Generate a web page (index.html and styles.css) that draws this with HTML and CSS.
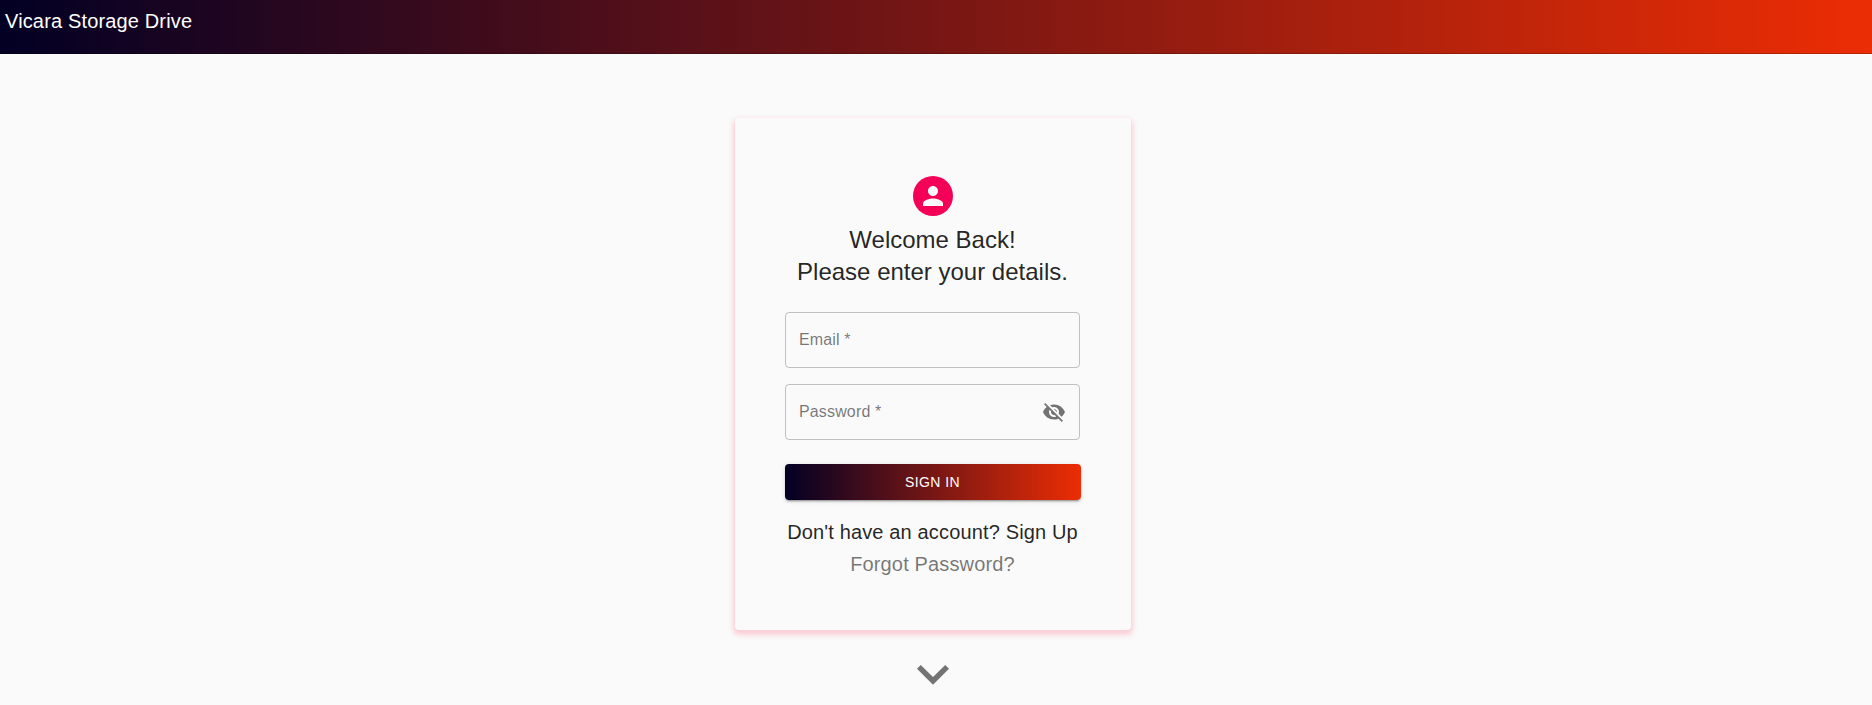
FILE: index.html
```html
<!DOCTYPE html>
<html lang="en">
<head>
<meta charset="utf-8">
<title>Vicara Storage Drive</title>
<link rel="stylesheet" href="styles.css">
</head>
<body>
<header class="topbar"><span class="brand">Vicara Storage Drive</span></header>
<main class="page">
  <section class="card">
    <div class="avatar">
      <svg class="person" viewBox="0 0 24 24"><path d="M12 12c2.210 0 4-1.790 4-4s-1.790-4-4-4-4 1.790-4 4 1.790 4 4 4zm0 2c-2.670 0-8 1.340-8 4v2h16v-2c0-2.660-5.330-4-8-4z"/></svg>
    </div>
    <h1 class="title">Welcome Back!<br>Please enter your details.</h1>
    <form class="form">
      <div class="field"><label class="label">Email *</label></div>
      <div class="field">
        <label class="label">Password *</label>
        <svg class="eye" viewBox="0 0 24 24"><path d="M12 7c2.760 0 5 2.240 5 5 0 .650-.130 1.260-.360 1.830l2.920 2.920c1.510-1.260 2.700-2.890 3.430-4.750-1.730-4.390-6-7.500-11-7.500-1.400 0-2.740.250-3.980.700l2.160 2.160C10.740 7.130 11.350 7 12 7zM2 4.270l2.280 2.280.460.460C3.080 8.300 1.780 10.020 1 12c1.730 4.390 6 7.500 11 7.500 1.550 0 3.030-.300 4.380-.840l.420.420L19.730 22 21 20.730 3.270 3 2 4.270zM7.530 9.800l1.550 1.550c-.050.210-.080.430-.080.650 0 1.660 1.340 3 3 3 .220 0 .440-.030.650-.080l1.550 1.550c-.670.330-1.410.530-2.200.530-2.760 0-5-2.240-5-5 0-.790.200-1.530.530-2.200zm4.310-.780l3.150 3.150.020-.160c0-1.660-1.340-3-3-3l-.170.010z"/></svg>
      </div>
      <button class="submit" type="button">SIGN IN</button>
    </form>
    <a class="link">Don't have an account? Sign Up</a>
    <a class="link muted">Forgot Password?</a>
  </section>
  <svg class="chevron" viewBox="0 0 24 24"><path d="M16.590 8.590L12 13.170 7.410 8.590 6 10l6 6 6-6z"/></svg>
</main>
</body>
</html>
```
FILE: styles.css
```css
* { box-sizing: border-box; }
html, body { height: 100%; }
body {
  margin: 0;
  overflow: hidden;
  background: #fafafa;
  color: rgba(0, 0, 0, .87);
  font-family: "Liberation Sans", Arial, sans-serif;
}
.topbar {
  height: 54px;
  padding: 5px;
  background: linear-gradient(90deg, #020024 0%, #ec2d04 100%);
  border-bottom: 1px solid rgba(0, 0, 0, .2);
}
.brand {
  display: block;
  color: #fff;
  font-size: 20px;
  line-height: 32px;
  letter-spacing: .15px;
}
.page {
  display: flex;
  flex-direction: column;
  align-items: center;
  padding: 64px 6px 0 0;
}
.card {
  display: flex;
  flex-direction: column;
  align-items: center;
  width: 396px;
  height: 512px;
  padding: 50px;
  border-radius: 4px;
  background: #fafafa;
  box-shadow: 0 3px 5px 2px rgba(255, 105, 135, .3);
}
.avatar {
  display: flex;
  align-items: center;
  justify-content: center;
  width: 40px;
  height: 40px;
  margin: 8px;
  border-radius: 50%;
  background: #f50057;
}
.person { width: 30px; height: 30px; fill: #fafafa; }
.title {
  margin: 0;
  padding-right: 1px;
  font-size: 24px;
  font-weight: 400;
  line-height: 32px;
  text-align: center;
}
.form {
  display: flex;
  flex-direction: column;
  gap: 16px;
  width: 296px;
  margin: 24px 0 16px;
}
.field {
  display: flex;
  align-items: center;
  justify-content: space-between;
  width: 295px;
  height: 56px;
  padding: 0 13px;
  border: 1px solid rgba(0, 0, 0, .23);
  border-radius: 4px;
}
.label {
  color: rgba(0, 0, 0, .54);
  font-size: 16px;
  letter-spacing: .15px;
}
.eye { width: 24px; height: 24px; fill: rgba(0, 0, 0, .54); }
.submit {
  height: 36px;
  margin-top: 8px;
  padding: 0 1px 0 0;
  border: 0;
  border-radius: 4px;
  background: linear-gradient(90deg, #020024 0%, #ec2d04 100%);
  color: #fff;
  font: 500 14px/36px "Liberation Sans", Arial, sans-serif;
  letter-spacing: .4px;
  box-shadow: 0 3px 1px -2px rgba(0, 0, 0, .2), 0 2px 2px rgba(0, 0, 0, .14), 0 1px 5px rgba(0, 0, 0, .12);
}
.link {
  padding-right: 1px;
  font-size: 20px;
  line-height: 32px;
  letter-spacing: .15px;
  white-space: nowrap;
}
.muted { color: rgba(0, 0, 0, .54); }
.chevron {
  flex: none;
  width: 64px;
  height: 64px;
  margin-top: 12px;
  fill: rgba(0, 0, 0, .54);
}
```
